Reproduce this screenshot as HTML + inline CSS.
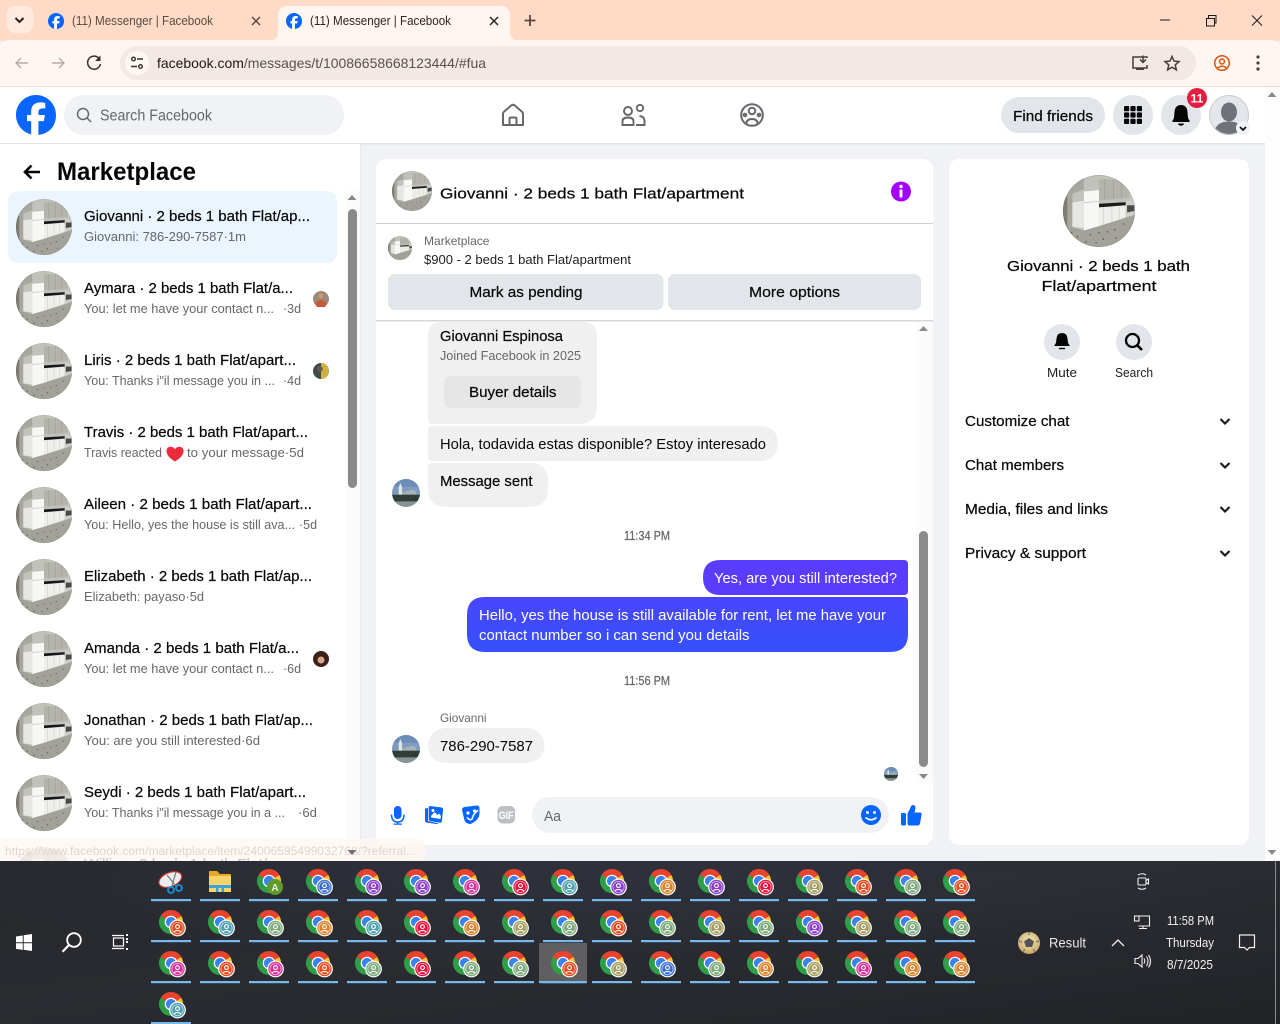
<!DOCTYPE html>
<html lang="en"><head><meta charset="utf-8"><title>(11) Messenger | Facebook</title>
<style>
html,body{margin:0;padding:0;width:1280px;height:1024px;overflow:hidden;background:#f1f2f6}
svg{display:block;position:absolute;left:0;top:0}
text{font-family:"Liberation Sans",Arial,sans-serif;white-space:pre}
.t{font-size:15px;fill:#080809;stroke:#080809;stroke-width:.22}
.n{font-size:15px;fill:#080809}
.s{font-size:13px;fill:#65676b}
.w{font-size:15px;fill:#fff}
.x{font-size:12.5px;fill:#f0f0f0}
.r{color:#e8103c}.c{color:#4f9fb0}.p{color:#8a3fc9}.o{color:#d9822b}.e{color:#e8491d}.g{color:#7aa87a}.k{color:#a39d60}.b{color:#3d6fd0}.m{color:#d9309a}
</style></head>
<body>
<svg width="1280" height="1024" viewBox="0 0 1280 1024" xmlns="http://www.w3.org/2000/svg">
<defs>
<clipPath id="cc"><circle r="50"/></clipPath>
<g id="kit" clip-path="url(#cc)">
  <rect x="-50" y="-50" width="100" height="100" fill="#c2c2bc"/>
  <path d="M-50-50V26L-37 24V-24L-21-30V-50z" fill="#a8a79f"/>
  <path d="M-50-20h6V26h-6z" fill="#7f7d72"/>
  <path d="M-37-12L-21-14V24L-37 22Z" fill="#e6e6e2"/>
  <path d="M0-44H42V-18L0-15Z" fill="#b4b4ad"/>
  <path d="M8-44v28M20-44v27M31-44v26" stroke="#98978f" stroke-width=".8" fill="none"/>
  <path d="M-21-27L0-29V24L-21 27Z" fill="#f7f7f5"/>
  <path d="M-21-12L0-13" stroke="#aaa" stroke-width=".8" fill="none"/>
  <path d="M0-10L50-13V-7L0-5Z" fill="#1a1a1a"/>
  <path d="M0-5L37-8V12L0 21Z" fill="#eeeeea"/>
  <path d="M6-5v24M18-6v21M28-7v18" stroke="#c4c4be" stroke-width=".7" fill="none"/>
  <path d="M37-14H50V6L37 11Z" fill="#d0d0cb"/>
  <path d="M39-8H49V0L39 2Z" fill="#4a4a48"/>
  <path d="M-50 24L-37 22L-21 27L0 21L50 5V50H-50Z" fill="#a3a29a"/>
  <g fill="#56554f"><circle cx="-30" cy="36" r="1.100"/><circle cx="-12" cy="33" r="1.100"/><circle cx="6" cy="39" r="1.100"/><circle cx="22" cy="26" r="1.100"/><circle cx="-18" cy="43" r="1.100"/><circle cx="12" cy="29" r="1"/><circle cx="34" cy="18" r="1"/><circle cx="-38" cy="30" r="1"/><circle cx="24" cy="38" r="1"/><circle cx="0" cy="30" r="1"/><circle cx="-4" cy="44" r="1"/></g>
  <circle r="49.500" fill="none" stroke="#000" stroke-opacity=".12" stroke-width="1"/>
</g>
<g id="house" clip-path="url(#cc)">
  <rect x="-50" y="-50" width="100" height="100" fill="#7f9cc0"/>
  <rect x="-50" y="-50" width="100" height="28" fill="#6b8db8"/>
  <path d="M-26-20L-20-36L-14-20V10H-26Z" fill="#dfe4ea"/>
  <path d="M-14-2L28-12L38 0V10H-14Z" fill="#a9b2b8"/>
  <rect x="-50" y="6" width="100" height="26" fill="#2f3f33"/>
  <rect x="-50" y="30" width="100" height="20" fill="#8a9498"/>
</g>
<g id="chr">
  <path d="M0 0L-10.400-6A12 12 0 0 1 10.400-6Z" fill="#e8432f"/>
  <path d="M0 0L10.400-6A12 12 0 0 1 0 12Z" fill="#fbc02d"/>
  <path d="M0 0L0 12A12 12 0 0 1-10.400-6Z" fill="#2f9e48"/>
  <circle r="6.300" fill="#fff"/><circle r="5.100" fill="#3b82ee"/>
</g>
<g id="c">
  <use href="#chr"/>
  <circle cx="6.500" cy="6" r="8.400" fill="#fff"/>
  <circle cx="6.500" cy="6" r="7.200" fill="currentColor"/>
  <circle cx="6.500" cy="6" r="5.600" fill="none" stroke="#fff" stroke-opacity=".65" stroke-width=".8"/>
  <circle cx="6.500" cy="4.600" r="1.900" fill="none" stroke="#fff" stroke-width="1.100"/>
  <path d="M3 10.200A3.800 2.800 0 0 1 10 10.200" fill="none" stroke="#fff" stroke-width="1.100"/>
</g>
<g id="fb">
  <circle cx="18" cy="18" r="16" fill="#fff"/>
  <path fill="#0866ff" d="M36 18C36 8.060 27.940 0 18 0S0 8.060 0 18c0 8.440 5.810 15.520 13.650 17.460V23.500H9.940V18h3.710v-2.370c0-6.130 2.770-8.960 8.790-8.960 1.140 0 3.100.22 3.900.45v5c-.42-.05-1.160-.07-2.070-.07-2.950 0-4.090 1.120-4.090 4.030V18h5.880l-1.010 5.500h-4.870v12.360C29.940 34.780 36 28.100 36 18z"/>
</g>
<linearGradient id="tb" x1="0" y1="0" x2="1" y2="1">
  <stop offset="0" stop-color="#25272b"/><stop offset=".45" stop-color="#2a2c31"/><stop offset=".8" stop-color="#25272c"/><stop offset="1" stop-color="#222327"/>
</linearGradient>
<radialGradient id="tb2" cx=".45" cy="0" r=".6"><stop offset="0" stop-color="#343848" stop-opacity=".55"/><stop offset="1" stop-color="#343848" stop-opacity="0"/></radialGradient>
<linearGradient id="bub" x1="0" y1="0" x2="0" y2="1"><stop offset="0" stop-color="#4a45fd"/><stop offset="1" stop-color="#3551fb"/></linearGradient>
<radialGradient id="ball" cx=".5" cy=".4" r=".6"><stop offset="0" stop-color="#f4e8c8"/><stop offset="1" stop-color="#c9a860"/></radialGradient>
</defs>

<!-- Browser chrome: tab strip -->
<rect width="1280" height="41" fill="#ffdbc7"/>
<rect x="6.500" y="6" width="27" height="27" rx="9" fill="#ffeade"/>
<path d="M15.500 18l4 4 4-4" fill="none" stroke="#2a1c16" stroke-width="2"/>
<use href="#fb" transform="translate(48 13) scale(.445)"/>
<text x="72" y="25" font-size="12.500" fill="#5c4a40" textLength="141" lengthAdjust="spacingAndGlyphs">(11) Messenger | Facebook</text>
<path d="M252 17l8 8m0-8l-8 8" stroke="#5c4a40" stroke-width="1.500"/>
<path d="M268 41q10 0 10-10V16q0-10 10-10h212q10 0 10 10v15q0 10 10 10z" fill="#fff5f1"/>
<use href="#fb" transform="translate(286 13) scale(.445)"/>
<text x="310" y="25" font-size="12.500" fill="#2f2420" textLength="141" lengthAdjust="spacingAndGlyphs">(11) Messenger | Facebook</text>
<path d="M490 17l8 8m0-8l-8 8" stroke="#2f2420" stroke-width="1.500"/>
<path d="M530 15v11M524.500 20.500h11" stroke="#5c4a40" stroke-width="1.800"/>
<path d="M1160 20h10" stroke="#1a1a1a" stroke-width="1"/>
<path d="M1206.500 18.500h8v7.500h-8zM1208.500 18v-2.500h7.500v7.500h-1.500" fill="none" stroke="#1a1a1a" stroke-width="1"/>
<path d="M1252 15.500l10 10m0-10l-10 10" stroke="#1a1a1a" stroke-width="1"/>

<!-- Toolbar -->
<path d="M0 50q0-10 10-10H1270q10 0 10 10V87H0z" fill="#fff5f1"/>
<rect y="86" width="1280" height="1" fill="#f6dccf"/>
<path d="M28 63H16m5-5l-5 5 5 5" fill="none" stroke="#b4aaa5" stroke-width="1.400"/>
<path d="M52 63h12m-5-5l5 5-5 5" fill="none" stroke="#b4aaa5" stroke-width="1.400"/>
<path d="M99.500 59A6.500 6.500 0 1 0 100.500 64" fill="none" stroke="#3d2f29" stroke-width="1.500"/><path d="M100.500 55.500v5.500h-5.500z" fill="#3d2f29"/>
<rect x="120" y="46" width="1076" height="34" rx="17" fill="#f3e8e4"/>
<circle cx="137" cy="63" r="12" fill="#fff7f3"/>
<g fill="none" stroke="#3d2f29" stroke-width="1.400"><circle cx="133.500" cy="59" r="1.800"/><path d="M137 59h6M131 66.500h6"/><circle cx="140.500" cy="66.500" r="1.800"/></g>
<text x="157" y="68" font-size="14" fill="#5c504a" textLength="329" lengthAdjust="spacingAndGlyphs"><tspan fill="#1f1714">facebook.com</tspan>/messages/t/10086658668123444/#fua</text>
<g fill="none" stroke="#4a3c36" stroke-width="1.500"><path d="M1147 58v-1h-14v11h14v-3"/><path d="M1143 55.500v7m-3-3l3 3 3-3"/></g><rect x="1136" y="68" width="8" height="2" fill="#4a3c36"/>
<path d="M1172 56.500l2 4.600 5 .5-3.800 3.300 1.200 4.900-4.400-2.600-4.400 2.600 1.200-4.900-3.800-3.300 5-.5z" fill="none" stroke="#4a3c36" stroke-width="1.500"/>
<g fill="none" stroke="#d9560f" stroke-width="1.500"><circle cx="1222" cy="63" r="7.300"/><circle cx="1222" cy="61.500" r="2.500"/><path d="M1217 68.500q5-4.500 10 0"/></g>
<g fill="#4a3c36"><circle cx="1258" cy="57" r="1.600"/><circle cx="1258" cy="63" r="1.600"/><circle cx="1258" cy="69" r="1.600"/></g>

<!-- Page background and page scrollbar -->
<rect y="87" width="1280" height="774" fill="#f1f2f6"/>
<rect x="1265" y="87" width="15" height="774" fill="#fdfdfd"/>
<path d="M1272 92l4.500 5h-9z" fill="#8a8a8a"/><path d="M1272 855l4.500-5h-9z" fill="#8a8a8a"/>

<!-- Facebook nav -->
<rect y="87" width="1265" height="56" fill="#fff"/>
<rect y="143" width="1265" height="1.500" fill="#e2e4e8"/>
<use href="#fb" transform="translate(16 95) scale(1.111)"/>
<rect x="64" y="95" width="280" height="40" rx="20" fill="#f0f2f5"/>
<circle cx="83" cy="114" r="5.500" fill="none" stroke="#65676b" stroke-width="1.500"/><path d="M87 118l4 4" stroke="#65676b" stroke-width="1.500"/>
<text x="100" y="120.500" font-size="16" fill="#65676b" textLength="112" lengthAdjust="spacingAndGlyphs">Search Facebook</text>
<path d="M503 125v-11q0-1.500 1.200-2.500l7-6q1.800-1.400 3.600 0l7 6q1.200 1 1.200 2.500V125zM509.500 125v-6q0-1.500 1.500-1.500h4q1.500 0 1.500 1.500v6" fill="none" stroke="#65676b" stroke-width="2" stroke-linejoin="round"/>
<g fill="none" stroke="#65676b" stroke-width="1.900"><circle cx="628" cy="111" r="4"/><path d="M622.500 125v-3.500q0-4 5.500-4t5.500 4v3.500z"/><circle cx="640" cy="108" r="3.200"/><path d="M636 125h8.500v-4q0-4.500-5-5"/></g>
<g fill="none" stroke="#65676b" stroke-width="2"><circle cx="752" cy="115" r="10.800"/><circle cx="752" cy="111" r="3.300"/><circle cx="745" cy="115" r="1.300"/><circle cx="759" cy="115" r="1.300"/><path d="M746.500 124q0-5 5.500-5t5.500 5"/></g>
<rect x="1001" y="97" width="104" height="36" rx="18" fill="#e2e5e9"/>
<text x="1013" y="121" font-size="15.500" class="t" textLength="80" lengthAdjust="spacingAndGlyphs">Find friends</text>
<circle cx="1133" cy="115" r="20" fill="#e2e5e9"/>
<g fill="#050505"><rect x="1124" y="106" width="5.200" height="5.200" rx="1"/><rect x="1130.400" y="106" width="5.200" height="5.200" rx="1"/><rect x="1136.800" y="106" width="5.200" height="5.200" rx="1"/><rect x="1124" y="112.400" width="5.200" height="5.200" rx="1"/><rect x="1130.400" y="112.400" width="5.200" height="5.200" rx="1"/><rect x="1136.800" y="112.400" width="5.200" height="5.200" rx="1"/><rect x="1124" y="118.800" width="5.200" height="5.200" rx="1"/><rect x="1130.400" y="118.800" width="5.200" height="5.200" rx="1"/><rect x="1136.800" y="118.800" width="5.200" height="5.200" rx="1"/></g>
<circle cx="1181" cy="115" r="20" fill="#e2e5e9"/>
<path d="M1181 105q-6 0-6.500 7l-.4 5q-.2 2-1.600 3.500-.7 1.500 1 1.500h15q1.700 0 1-1.500-1.400-1.500-1.600-3.500l-.4-5q-.5-7-6.500-7z" fill="#050505"/><path d="M1178 123.500a3 2.200 0 0 0 6 0" fill="#050505"/>
<circle cx="1197" cy="98" r="10" fill="#e41e3f"/>
<text x="1197" y="102.500" font-size="12" font-weight="bold" fill="#fff" text-anchor="middle">11</text>
<clipPath id="me"><circle cx="1229" cy="115" r="20"/></clipPath>
<circle cx="1229" cy="115" r="20" fill="#e4e6eb"/>
<g clip-path="url(#me)"><ellipse cx="1229" cy="112" rx="8" ry="9.500" fill="#6f7379"/><path d="M1214 136q0-14.500 15-14.500t15 14.500z" fill="#6f7379"/></g>
<circle cx="1229" cy="115" r="19.500" fill="none" stroke="#c9ccd1"/>
<circle cx="1243" cy="128" r="7" fill="#f0f2f5"/><path d="M1240 127l3 3 3-3" fill="none" stroke="#050505" stroke-width="1.600"/>

<!-- Left sidebar -->
<rect y="144" width="360" height="717" fill="#fff"/>
<rect x="360" y="144" width="1" height="717" fill="#e6e8ec"/>
<path d="M40 172H25m6.500-6.500L25 172l6.500 6.500" fill="none" stroke="#050505" stroke-width="2.600"/>
<text x="57" y="180" font-size="25" font-weight="bold" fill="#050505" textLength="139" lengthAdjust="spacingAndGlyphs">Marketplace</text>
<rect x="345" y="191" width="15" height="670" fill="#fbfbfb"/>
<path d="M352 195l4.500 5h-9z" fill="#8a8a8a"/>
<rect x="348" y="209" width="9" height="279" rx="4.500" fill="#8a8a8a"/>
<path d="M352 855l4.500-5h-9z" fill="#8a8a8a"/>
<rect x="8" y="191" width="329" height="72" rx="10" fill="#ebf5ff"/>

<use href="#kit" transform="translate(44 227) scale(.56)"/>
<text x="84" y="221" class="t" textLength="226" lengthAdjust="spacingAndGlyphs">Giovanni · 2 beds 1 bath Flat/ap...</text>
<text x="84" y="241" class="s" textLength="162" lengthAdjust="spacingAndGlyphs">Giovanni: 786-290-7587·1m</text>

<use href="#kit" transform="translate(44 299) scale(.56)"/>
<text x="84" y="293" class="t" textLength="209" lengthAdjust="spacingAndGlyphs">Aymara · 2 beds 1 bath Flat/a...</text>
<text x="84" y="313" class="s" textLength="190" lengthAdjust="spacingAndGlyphs">You: let me have your contact n...</text>
<text x="283" y="313" class="s" textLength="18" lengthAdjust="spacingAndGlyphs">·3d</text>
<circle cx="321" cy="299" r="8" fill="#9b8a78"/><path d="M315 304q6-8 12 0l-2 3h-8z" fill="#c8583a"/><circle cx="321" cy="296" r="2.500" fill="#c89878"/>

<use href="#kit" transform="translate(44 371) scale(.56)"/>
<text x="84" y="365" class="t" textLength="212" lengthAdjust="spacingAndGlyphs">Liris · 2 beds 1 bath Flat/apart...</text>
<text x="84" y="385" class="s" textLength="191" lengthAdjust="spacingAndGlyphs">You: Thanks i"il message you in ...</text>
<text x="283" y="385" class="s" textLength="18" lengthAdjust="spacingAndGlyphs">·4d</text>
<circle cx="321" cy="371" r="8" fill="#3f4a4a"/><path d="M321 363a8 8 0 0 1 0 16z" fill="#d2b13f"/><circle cx="320" cy="369" r="2.800" fill="#6b5a4a"/>

<use href="#kit" transform="translate(44 443) scale(.56)"/>
<text x="84" y="437" class="t" textLength="224" lengthAdjust="spacingAndGlyphs">Travis · 2 beds 1 bath Flat/apart...</text>
<text x="84" y="457" class="s" textLength="78" lengthAdjust="spacingAndGlyphs">Travis reacted</text>
<path d="M175 461.500q-8.500-5-8.500-10.500 0-4 4-4.300 3 0 4.500 2.500 1.500-2.500 4.500-2.500 4 .3 4 4.300 0 5.500-8.500 10.500z" fill="#eb2b3c"/>
<text x="187" y="457" class="s" textLength="117" lengthAdjust="spacingAndGlyphs">to your message·5d</text>

<use href="#kit" transform="translate(44 515) scale(.56)"/>
<text x="84" y="509" class="t" textLength="228" lengthAdjust="spacingAndGlyphs">Aileen · 2 beds 1 bath Flat/apart...</text>
<text x="84" y="529" class="s" textLength="211" lengthAdjust="spacingAndGlyphs">You: Hello, yes the house is still ava...</text>
<text x="299" y="529" class="s" textLength="18" lengthAdjust="spacingAndGlyphs">·5d</text>

<use href="#kit" transform="translate(44 587) scale(.56)"/>
<text x="84" y="581" class="t" textLength="228" lengthAdjust="spacingAndGlyphs">Elizabeth · 2 beds 1 bath Flat/ap...</text>
<text x="84" y="601" class="s" textLength="120" lengthAdjust="spacingAndGlyphs">Elizabeth: payaso·5d</text>

<use href="#kit" transform="translate(44 659) scale(.56)"/>
<text x="84" y="653" class="t" textLength="215" lengthAdjust="spacingAndGlyphs">Amanda · 2 beds 1 bath Flat/a...</text>
<text x="84" y="673" class="s" textLength="190" lengthAdjust="spacingAndGlyphs">You: let me have your contact n...</text>
<text x="283" y="673" class="s" textLength="18" lengthAdjust="spacingAndGlyphs">·6d</text>
<circle cx="321" cy="659" r="8" fill="#3a2018"/><circle cx="321" cy="660" r="3.500" fill="#d8a48a"/>

<use href="#kit" transform="translate(44 731) scale(.56)"/>
<text x="84" y="725" class="t" textLength="229" lengthAdjust="spacingAndGlyphs">Jonathan · 2 beds 1 bath Flat/ap...</text>
<text x="84" y="745" class="s" textLength="176" lengthAdjust="spacingAndGlyphs">You: are you still interested·6d</text>

<use href="#kit" transform="translate(44 803) scale(.56)"/>
<text x="84" y="797" class="t" textLength="222" lengthAdjust="spacingAndGlyphs">Seydi · 2 beds 1 bath Flat/apart...</text>
<text x="84" y="817" class="s" textLength="201" lengthAdjust="spacingAndGlyphs">You: Thanks i"il message you in a ...</text>
<text x="298" y="817" class="s" textLength="19" lengthAdjust="spacingAndGlyphs">·6d</text>

<use href="#kit" transform="translate(44 875) scale(.56)"/>
<text x="84" y="869" class="t" textLength="196" lengthAdjust="spacingAndGlyphs">Willi... · 2 beds 1 bath Flat/...</text>

<!-- Chat card -->
<rect x="376" y="159" width="557" height="686" rx="10" fill="#fff"/>
<use href="#kit" transform="translate(412 191) scale(.4)"/>
<text x="440" y="198.500" font-size="18" class="t" textLength="304" lengthAdjust="spacingAndGlyphs">Giovanni · 2 beds 1 bath Flat/apartment</text>
<circle cx="901" cy="191.500" r="10" fill="#a200ff"/><circle cx="901" cy="186.500" r="1.700" fill="#fff"/><rect x="899.500" y="189.500" width="3" height="8" rx=".8" fill="#fff"/>
<rect x="376" y="223" width="557" height="1" fill="#ced0d4"/>
<use href="#kit" transform="translate(400 248) scale(.24)"/>
<text x="424" y="245" font-size="12" fill="#65676b" textLength="65.500" lengthAdjust="spacingAndGlyphs">Marketplace</text>
<text x="424" y="264" font-size="13" fill="#1c1e21" textLength="207" lengthAdjust="spacingAndGlyphs">$900 - 2 beds 1 bath Flat/apartment</text>
<rect x="388" y="274" width="275.500" height="36" rx="7" fill="#e2e5e9"/>
<rect x="668" y="274" width="253" height="36" rx="7" fill="#e2e5e9"/>
<text x="469.500" y="297" class="t" textLength="113" lengthAdjust="spacingAndGlyphs">Mark as pending</text>
<text x="749" y="297" class="t" textLength="91" lengthAdjust="spacingAndGlyphs">More options</text>
<rect x="376" y="320" width="557" height="1" fill="#d4d6db"/>
<rect x="376" y="321" width="557" height="1" fill="#ecedf0"/>

<!-- Chat scrollbar -->
<rect x="916" y="322" width="17" height="461" fill="#fbfbfb"/>
<path d="M923.500 326l4.500 5h-9z" fill="#8a8a8a"/>
<rect x="919" y="531" width="9" height="236" rx="4.500" fill="#8a8a8a"/>
<path d="M923.500 779l4.500-5h-9z" fill="#8a8a8a"/>

<!-- Messages -->
<path d="M428 322h169v84q0 18-18 18H432q-4 0-4-4z" fill="#f0f0f0"/>
<path d="M428 322h14q-14 0-14 14zM597 322h-14q14 0 14 14z" fill="#fff"/>
<text x="440" y="341" font-size="15.500" class="t" textLength="123" lengthAdjust="spacingAndGlyphs">Giovanni Espinosa</text>
<text x="440" y="360" class="s" textLength="141" lengthAdjust="spacingAndGlyphs">Joined Facebook in 2025</text>
<rect x="444" y="376" width="137" height="32" rx="7" fill="#e6e6e6"/>
<text x="469" y="397" class="t" textLength="87.500" lengthAdjust="spacingAndGlyphs">Buyer details</text>
<path d="M432 426H760q17.500 0 17.500 17.500T760 461H432q-4 0-4-4V430q0-4 4-4z" fill="#f0f0f0"/>
<text x="440" y="449" class="n" textLength="326" lengthAdjust="spacingAndGlyphs">Hola, todavida estas disponible? Estoy interesado</text>
<path d="M432 463H530q18 0 18 18v8q0 18-18 18H446q-18 0-18-18V467q0-4 4-4z" fill="#f0f0f0"/>
<text x="440" y="486" class="t" textLength="92.500" lengthAdjust="spacingAndGlyphs">Message sent</text>
<use href="#house" transform="translate(406 493) scale(.28)"/>
<text x="624" y="540" font-size="12" class="s" stroke="#65676b" stroke-width=".25" textLength="46" lengthAdjust="spacingAndGlyphs">11:34 PM</text>
<path d="M720.500 560H904q4 0 4 4v27q0 4-4 4H720.500q-17.500 0-17.500-17.500T720.500 560z" fill="#593cfd"/>
<text x="714" y="583" class="w" textLength="183" lengthAdjust="spacingAndGlyphs">Yes, are you still interested?</text>
<path d="M485 597H904q4 0 4 4v33q0 18-18 18H485q-18 0-18-18v-19q0-18 18-18z" fill="url(#bub)"/>
<text x="479" y="620" class="w" textLength="407" lengthAdjust="spacingAndGlyphs">Hello, yes the house is still available for rent, let me have your</text>
<text x="479" y="640" class="w" textLength="270.500" lengthAdjust="spacingAndGlyphs">contact number so i can send you details</text>
<text x="624" y="685" font-size="12" class="s" stroke="#65676b" stroke-width=".25" textLength="46" lengthAdjust="spacingAndGlyphs">11:56 PM</text>
<text x="440" y="722" font-size="12" fill="#65676b" textLength="46.500" lengthAdjust="spacingAndGlyphs">Giovanni</text>
<rect x="428" y="728" width="116.500" height="35" rx="17.500" fill="#f0f0f0"/>
<text x="440" y="751" class="n" textLength="93" lengthAdjust="spacingAndGlyphs">786-290-7587</text>
<use href="#house" transform="translate(406 749) scale(.28)"/>
<use href="#house" transform="translate(891 774) scale(.14)"/>

<!-- Composer -->
<g fill="#0866ff">
  <rect x="394" y="806" width="7.500" height="13" rx="3.750"/>
  <path d="M391.500 814.500q0 7.500 6.250 7.500t6.250-7.500" fill="none" stroke="#0866ff" stroke-width="1.500"/>
  <rect x="397" y="822" width="1.500" height="2.500"/><rect x="393.500" y="823.500" width="8.500" height="1.300" rx=".6"/>
  <path d="M425 808.500l3-.5v13l10 2.300-.3 1-11.200-1.800q-1.500-.3-1.500-1.500zM430 806l11.500 1.500q1.800.3 1.600 2l-1.300 12q-.2 1.500-1.800 1.300L430 821q-1.300-.2-1.300-1.500V807.300q0-1.300 1.300-1.300z"/>
  <path d="M462 810q0-2.500 2.500-3l12-1.500q3-.2 3 2.500v5q0 7-9 11-4.500 0-6-3.500z"/>
</g>
<path d="M431 816l3.500-4 3 3 1.500-1.500 2 2.500-.6 3-9.400-1.500z" fill="#fff"/><circle cx="433" cy="810.500" r="1.500" fill="#fff"/>
<g fill="#fff"><circle cx="468" cy="813" r="1.600"/><circle cx="474.500" cy="811" r="1.600"/></g>
<path d="M467 817.500q3.500 3.500 5 1.500l1.500-4 4.500-5" fill="none" stroke="#fff" stroke-width="1.500"/>
<rect x="497.500" y="806" width="17.500" height="17.500" rx="5" fill="#bcc0c4"/>
<text x="506.200" y="819" font-size="11" font-weight="bold" fill="#fff" text-anchor="middle" textLength="15" lengthAdjust="spacingAndGlyphs">GIF</text>
<rect x="532" y="797" width="357" height="36" rx="18" fill="#f0f2f5"/>
<text x="544" y="821" font-size="15" fill="#65676b" textLength="17" lengthAdjust="spacingAndGlyphs">Aa</text>
<circle cx="871" cy="815" r="10" fill="#0866ff"/><circle cx="867.500" cy="812.500" r="1.500" fill="#fff"/><circle cx="874.500" cy="812.500" r="1.500" fill="#fff"/><path d="M865.500 817.500q5.500 4.500 11 0" fill="none" stroke="#fff" stroke-width="1.700"/>
<g fill="#0866ff"><rect x="901" y="813" width="5" height="12.500" rx="1.200"/><path d="M907.500 813.500l3.500-7q.5-1.500 2-1.500 2.500 0 2.500 3l-1 4.500h5.400q2 0 1.700 2.200l-1.600 8.800q-.4 2-2.500 2H909.500q-2 0-2-2z"/></g>

<!-- Right panel -->
<rect x="949" y="159" width="300" height="686" rx="10" fill="#fff"/>
<use href="#kit" transform="translate(1099 211) scale(.72)"/>
<text x="1007" y="271" font-size="18" class="t" textLength="183" lengthAdjust="spacingAndGlyphs">Giovanni · 2 beds 1 bath</text>
<text x="1041.500" y="291" font-size="18" class="t" textLength="115" lengthAdjust="spacingAndGlyphs">Flat/apartment</text>
<circle cx="1062" cy="342" r="18" fill="#e2e5e9"/>
<path d="M1062 333q-5 0-5.500 5.500l-.4 3.500q-.3 2-1.600 3-.5 1 .7 1h13.600q1.200 0 .7-1-1.300-1-1.600-3l-.4-3.500q-.5-5.500-5.500-5.500z" fill="#050505"/><path d="M1059 348.500h6" stroke="#050505" stroke-width="1.400"/>
<circle cx="1134" cy="342" r="18" fill="#e2e5e9"/>
<circle cx="1132.500" cy="340.500" r="6.500" fill="none" stroke="#050505" stroke-width="2.300"/><path d="M1137 345l5 5" stroke="#050505" stroke-width="2.600"/>
<text x="1047" y="377" font-size="12.500" fill="#1c1e21" textLength="30" lengthAdjust="spacingAndGlyphs">Mute</text>
<text x="1115" y="377" font-size="12.500" fill="#1c1e21" textLength="38" lengthAdjust="spacingAndGlyphs">Search</text>
<text x="965" y="426" class="t" textLength="104.500" lengthAdjust="spacingAndGlyphs">Customize chat</text>
<text x="965" y="470" class="t" textLength="99" lengthAdjust="spacingAndGlyphs">Chat members</text>
<text x="965" y="514" class="t" textLength="143" lengthAdjust="spacingAndGlyphs">Media, files and links</text>
<text x="965" y="558" class="t" textLength="121" lengthAdjust="spacingAndGlyphs">Privacy &amp; support</text>
<g fill="none" stroke="#1c1e21" stroke-width="2.200"><path d="M1220.500 419l4.500 4.500 4.500-4.500"/><path d="M1220.500 463l4.500 4.500 4.500-4.500"/><path d="M1220.500 507l4.500 4.500 4.500-4.500"/><path d="M1220.500 551l4.500 4.500 4.500-4.500"/></g>

<!-- Link status bubble -->
<path d="M0 839H419q6 0 6 6v16H0z" fill="#fff6f1" fill-opacity=".8"/>
<text x="5" y="855" font-size="12" fill="#dcd5d1" textLength="411" lengthAdjust="spacingAndGlyphs">https://www.facebook.com/marketplace/item/24006595499032768/?referral...</text>
<path d="M352 855l4.500-5h-9z" fill="#6f6f6f"/>

<!-- Taskbar -->
<rect y="861" width="1280" height="163" fill="url(#tb)"/>
<rect y="861" width="1280" height="163" fill="url(#tb2)"/>
<rect x="1275" y="861" width="1" height="163" fill="#8a8c90"/>
<rect x="539" y="943" width="48" height="40" fill="#5f5f62"/>
<path d="M16 936.500l6.800-1v6.700H16zM23.700 935.300l8.300-1.300v8.200h-8.300zM16 943.200h6.800v6.700l-6.800-1zM23.700 943.200H32V951l-8.300-1.200z" fill="#fff"/>
<circle cx="74" cy="940" r="6.800" fill="none" stroke="#fff" stroke-width="1.800"/><path d="M69 945l-6.500 6.800" stroke="#fff" stroke-width="2.200"/>
<g fill="none" stroke="#fff" stroke-width="1.200"><rect x="113.500" y="938" width="10" height="8"/><path d="M112 935.500h12M112 948.500h12"/></g><g fill="#fff"><rect x="126" y="934" width="2" height="2"/><rect x="126" y="938" width="2" height="2"/><rect x="126" y="941" width="2" height="2"/><rect x="126" y="948" width="2" height="2"/></g>

<!-- Taskbar underlines -->
<g fill="#76b9ed" id="ul">
<rect x="151" y="899" width="40" height="2.200"/><rect x="200" y="899" width="40" height="2.200"/><rect x="249" y="899" width="40" height="2.200"/><rect x="298" y="899" width="40" height="2.200"/><rect x="347" y="899" width="40" height="2.200"/><rect x="396" y="899" width="40" height="2.200"/><rect x="445" y="899" width="40" height="2.200"/><rect x="494" y="899" width="40" height="2.200"/><rect x="543" y="899" width="40" height="2.200"/><rect x="592" y="899" width="40" height="2.200"/><rect x="641" y="899" width="40" height="2.200"/><rect x="690" y="899" width="40" height="2.200"/><rect x="739" y="899" width="40" height="2.200"/><rect x="788" y="899" width="40" height="2.200"/><rect x="837" y="899" width="40" height="2.200"/><rect x="886" y="899" width="40" height="2.200"/><rect x="935" y="899" width="40" height="2.200"/>
</g>
<use href="#ul" y="41"/><use href="#ul" y="82"/>
<rect x="539" y="981" width="48" height="2.200" fill="#76b9ed"/>
<rect x="151" y="1022" width="40" height="2" fill="#76b9ed"/>

<!-- Taskbar app icons -->
<g transform="translate(172 881)">
  <ellipse cx="-1" cy="-2" rx="12" ry="7" transform="rotate(-22)" fill="#eee" stroke="#c9342c" stroke-width="1.200"/>
  <path d="M-5-6L4 5M4-9L0 5" stroke="#777" stroke-width="1.200" fill="none"/>
  <circle cx="-1" cy="9" r="3" fill="none" stroke="#1c8fd8" stroke-width="1.800"/><circle cx="7" cy="7" r="3" fill="none" stroke="#1c8fd8" stroke-width="1.800"/>
</g>
<g transform="translate(220 881)">
  <path d="M-11-10h8l3 3h11V11h-22z" fill="#e5a92b"/><rect x="-11" y="-5" width="22" height="16" fill="#f9d468"/>
  <rect x="-11" y="4" width="22" height="3" fill="#3fa0dc"/><path d="M-4 4h8v7h-2.500V7h-3v4H-4z" fill="#3fa0dc"/>
</g>
<g transform="translate(269 881)"><use href="#chr"/><circle cx="6" cy="6" r="8" fill="#5f9a2d"/><text x="6" y="10" font-size="10" font-weight="bold" fill="#e6f0d8" text-anchor="middle">A</text></g>

<!-- Row 1 -->
<use href="#c" class="b" x="318" y="881"/><use href="#c" class="p" x="367" y="881"/><use href="#c" class="p" x="416" y="881"/><use href="#c" class="m" x="465" y="881"/><use href="#c" class="r" x="514" y="881"/><use href="#c" class="c" x="563" y="881"/><use href="#c" class="p" x="612" y="881"/><use href="#c" class="o" x="661" y="881"/><use href="#c" class="p" x="710" y="881"/><use href="#c" class="r" x="759" y="881"/><use href="#c" class="k" x="808" y="881"/><use href="#c" class="e" x="857" y="881"/><use href="#c" class="g" x="906" y="881"/><use href="#c" class="e" x="955" y="881"/>
<!-- Row 2 -->
<use href="#c" class="e" x="171" y="922"/><use href="#c" class="c" x="220" y="922"/><use href="#c" class="g" x="269" y="922"/><use href="#c" class="o" x="318" y="922"/><use href="#c" class="c" x="367" y="922"/><use href="#c" class="r" x="416" y="922"/><use href="#c" class="o" x="465" y="922"/><use href="#c" class="k" x="514" y="922"/><use href="#c" class="g" x="563" y="922"/><use href="#c" class="e" x="612" y="922"/><use href="#c" class="g" x="661" y="922"/><use href="#c" class="k" x="710" y="922"/><use href="#c" class="g" x="759" y="922"/><use href="#c" class="p" x="808" y="922"/><use href="#c" class="k" x="857" y="922"/><use href="#c" class="g" x="906" y="922"/><use href="#c" class="g" x="955" y="922"/>
<!-- Row 3 -->
<use href="#c" class="m" x="171" y="963"/><use href="#c" class="e" x="220" y="963"/><use href="#c" class="m" x="269" y="963"/><use href="#c" class="e" x="318" y="963"/><use href="#c" class="g" x="367" y="963"/><use href="#c" class="r" x="416" y="963"/><use href="#c" class="g" x="465" y="963"/><use href="#c" class="g" x="514" y="963"/><use href="#c" class="e" x="563" y="963"/><use href="#c" class="k" x="612" y="963"/><use href="#c" class="b" x="661" y="963"/><use href="#c" class="g" x="710" y="963"/><use href="#c" class="o" x="759" y="963"/><use href="#c" class="k" x="808" y="963"/><use href="#c" class="m" x="857" y="963"/><use href="#c" class="o" x="906" y="963"/><use href="#c" class="o" x="955" y="963"/>
<!-- Row 4 -->
<use href="#c" class="c" x="171" y="1004"/>

<!-- System tray -->
<circle cx="1029" cy="943" r="11" fill="url(#ball)"/><path d="M1029 938l5 3.500-2 5.500h-6l-2-5.500z" fill="#55534f"/><path d="M1029 932v3M1019 941l3 1M1039 941l-3 1M1023 952l2-3M1035 952l-2-3" stroke="#8a8170" stroke-width="1.500"/>
<text x="1049" y="947.500" font-size="14" fill="#e8e8e8" textLength="37" lengthAdjust="spacingAndGlyphs">Result</text>
<path d="M1112 946l6-6 6 6" fill="none" stroke="#f0f0f0" stroke-width="1.300"/>
<g fill="none" stroke="#f0f0f0" stroke-width="1.100"><rect x="1138" y="878" width="8" height="7" rx="1"/><path d="M1146 880.500l2.500-1.500v5l-2.500-1.500"/><path d="M1138 875q4-2.500 8 0M1138 888q4 2.500 8 0"/></g>
<g fill="none" stroke="#f0f0f0" stroke-width="1.100"><path d="M1138 916h11.500v10h-11M1143 926v2.500M1139 928.500h8"/><rect x="1134.500" y="916" width="4.500" height="5"/></g>
<g fill="none" stroke="#f0f0f0" stroke-width="1.100"><path d="M1135 958.500h3l4-3.500v12l-4-3.500h-3z"/><path d="M1144 958.500q1.500 2.500 0 5M1146.500 956.500q3 4.500 0 9.500M1148.500 955q4 6 0 12.500"/></g>
<text x="1167" y="925" class="x" textLength="47" lengthAdjust="spacingAndGlyphs">11:58 PM</text>
<text x="1166" y="947" class="x" textLength="48" lengthAdjust="spacingAndGlyphs">Thursday</text>
<text x="1167" y="969" class="x" textLength="46" lengthAdjust="spacingAndGlyphs">8/7/2025</text>
<path d="M1239.500 935h15v12.500h-5l-2.500 2.500-2.500-2.500h-5z" fill="none" stroke="#f0f0f0" stroke-width="1.200"/>
</svg>
</body></html>
